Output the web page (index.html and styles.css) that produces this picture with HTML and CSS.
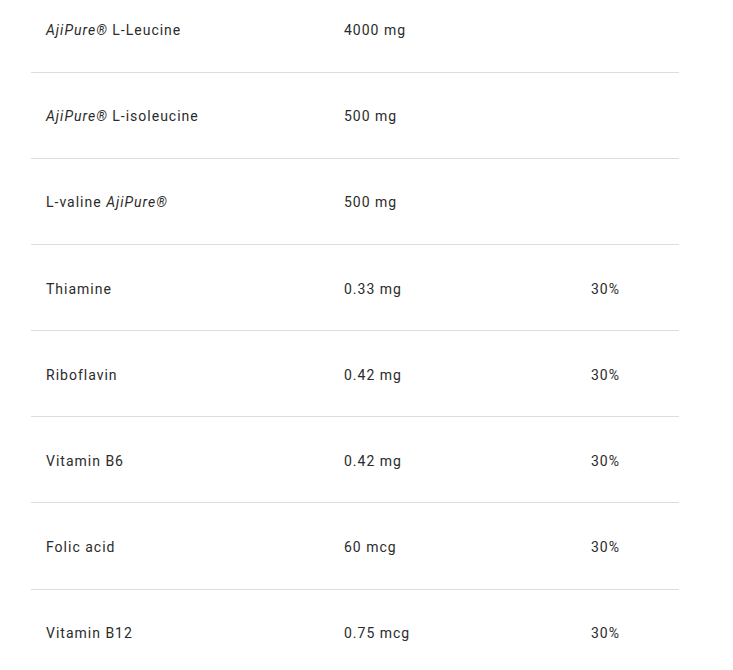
FILE: index.html
```html
<!DOCTYPE html>
<html>
<head>
<meta charset="utf-8">
<link rel="stylesheet" href="styles.css">
</head>
<body>
<table class="facts">
  <colgroup>
    <col class="c-name"><col class="c-amount"><col class="c-rda">
  </colgroup>
  <tbody>
    <tr><td><em>AjiPure®</em> L-Leucine</td><td>4000 mg</td><td></td></tr>
    <tr><td><em>AjiPure®</em> L-isoleucine</td><td>500 mg</td><td></td></tr>
    <tr><td>L-valine <em>AjiPure®</em></td><td>500 mg</td><td></td></tr>
    <tr><td>Thiamine</td><td>0.33 mg</td><td>30%</td></tr>
    <tr><td>Riboflavin</td><td>0.42 mg</td><td>30%</td></tr>
    <tr><td>Vitamin B6</td><td>0.42 mg</td><td>30%</td></tr>
    <tr><td>Folic acid</td><td>60 mcg</td><td>30%</td></tr>
    <tr><td>Vitamin B12</td><td>0.75 mcg</td><td>30%</td></tr>
  </tbody>
</table>
</body>
</html>
```
FILE: styles.css
```css
html, body {
  margin: 0;
  padding: 0;
  background: #ffffff;
}
body {
  font-family: Roboto, "Liberation Sans", Arial, sans-serif;
  font-size: 14px;
  color: #2b2b2b;
  letter-spacing: 1px;
}
.facts {
  margin: -14px 0 0 31px;
  width: 648px;
  border-collapse: collapse;
  table-layout: fixed;
}
.c-name { width: 298px; }
.c-amount { width: 247px; }
.c-rda { width: 103px; }
.facts td {
  height: 86.17px;
  padding: 2px 15px 0;
  box-sizing: border-box;
  vertical-align: middle;
  border-bottom: 1px solid #dddddd;
  line-height: 20px;
}
.facts em { font-style: italic; }
```
